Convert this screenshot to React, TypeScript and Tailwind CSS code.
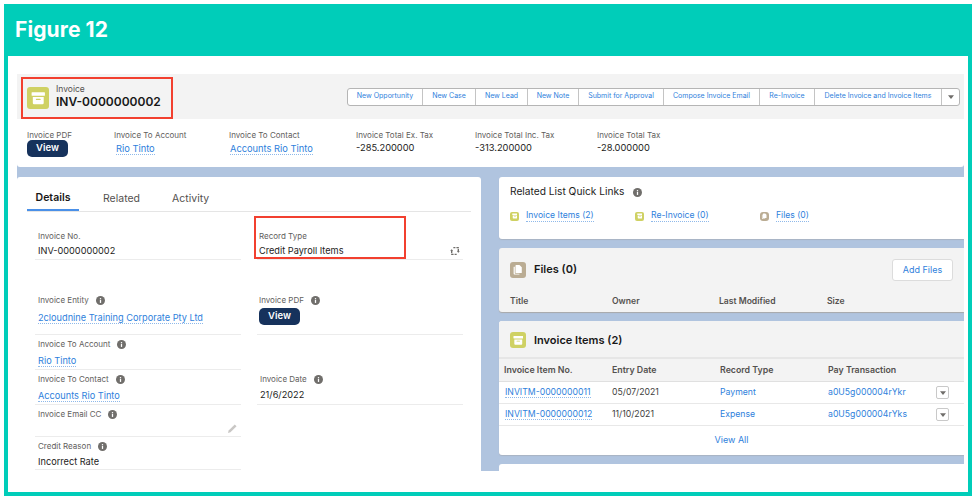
const font = "font-['Inter',sans-serif]"

function ArchiveIcon({ size, className }: { size: number; className: string }) {
  return (
    <span className={`inline-flex shrink-0 items-center justify-center ${className}`} style={{ width: size, height: size }}>
      <svg viewBox="0 0 24 24" width={size * 0.66} height={size * 0.66} fill="white">
        <rect x="1" y="2" width="22" height="6" rx="1" />
        <path d="M3 10h18v10a2 2 0 0 1-2 2H5a2 2 0 0 1-2-2z" />
        <rect x="8" y="13" width="8" height="2" rx="1" fill="#cfd163" />
      </svg>
    </span>
  )
}

function FilesIcon({ size }: { size: number }) {
  return (
    <span className="inline-flex shrink-0 items-center justify-center rounded-[3px] bg-[#baac93]" style={{ width: size, height: size }}>
      <svg viewBox="0 0 24 24" width={size * 0.7} height={size * 0.7} fill="white">
        <path d="M9 2h7l5 5v11a1.500 1.500 0 0 1-1.500 1.500H9A1.500 1.500 0 0 1 7.500 18V3.500A1.500 1.500 0 0 1 9 2z" />
        <path d="M4 6h2v14a1 1 0 0 0 1 1h9v1.500H5A1.500 1.500 0 0 1 3.500 21V6.500z" />
      </svg>
    </span>
  )
}

function Info() {
  return (
    <svg viewBox="0 0 10 10" className="ml-[7px] h-[9px] w-[9px] shrink-0">
      <circle cx="5" cy="5" r="5" fill="#706e6b" />
      <rect x="4.300" y="4.300" width="1.400" height="3.400" fill="white" />
      <rect x="4.300" y="2.300" width="1.400" height="1.300" fill="white" />
    </svg>
  )
}

function Caret() {
  return (
    <svg viewBox="0 0 8 5" className="h-[4px] w-[6px]">
      <path d="M0 0h8L4 5z" fill="#706e6b" />
    </svg>
  )
}

function Linked({ children }: { children: React.ReactNode }) {
  return <span className="border-b border-dotted border-[#8fb9ea] leading-[11px] text-[#2f7fdc]">{children}</span>
}

function ViewButton() {
  return <div className="flex h-[17px] w-[41px] items-center justify-center rounded-[5px] bg-[#16325c] text-[9.500px] font-semibold text-white">View</div>
}

function Label({ text, info }: { text: string; info?: boolean }) {
  return (
    <div className="flex h-[12px] items-center text-[8px] text-[#5f5e5c]">
      {text}
      {info && <Info />}
    </div>
  )
}

// pt = distance from row top to label, gap = distance from label to value
function Field({ label, info, children, pt, gap }: { label: string; info?: boolean; children?: React.ReactNode; pt: string; gap: string }) {
  return (
    <div className={`border-b border-[#ececec] pl-[3px] ${pt}`}>
      <Label text={label} info={info} />
      <div className={`relative flex h-[14px] items-center text-[9.200px] text-[#1d1c1b] ${gap}`}>{children}</div>
    </div>
  )
}

const actions = [
  { text: "New Opportunity", w: "w-[75px]" },
  { text: "New Case", w: "w-[53px]" },
  { text: "New Lead", w: "w-[52px]" },
  { text: "New Note", w: "w-[51px]" },
  { text: "Submit for Approval", w: "w-[85px]" },
  { text: "Compose Invoice Email", w: "w-[96px]" },
  { text: "Re-Invoice", w: "w-[55px]" },
  { text: "Delete Invoice and Invoice Items", w: "w-[127px]" },
]

const highlights = [
  { label: "Invoice To Account", w: "w-[115px]", link: "Rio Tinto", pl: "pl-[2px]" },
  { label: "Invoice To Contact", w: "w-[127px]", link: "Accounts Rio Tinto", pl: "pl-[1px]" },
  { label: "Invoice Total Ex. Tax", w: "w-[119px]", value: "-285.200000" },
  { label: "Invoice Total Inc. Tax", w: "w-[122px]", value: "-313.200000" },
  { label: "Invoice Total Tax", w: "w-[120px]", value: "-28.000000" },
]

const items = [
  { no: "INVITM-0000000011", date: "05/07/2021", type: "Payment", tx: "a0U5g000004rYkr" },
  { no: "INVITM-0000000012", date: "11/10/2021", type: "Expense", tx: "a0U5g000004rYks" },
]

export default function App() {
  return (
    <div className={`h-[500px] w-[976px] overflow-hidden bg-white p-[4px] ${font}`}>
      <div className="flex h-[492px] w-[968px] flex-col bg-[#00cdb9] px-[4px] pb-[4px]">
        <div className="flex h-[52px] shrink-0 items-center pb-[1px] pl-[7px] text-[21px] font-bold tracking-[0.1px] text-white">Figure 12</div>
        <div className="flex-1 overflow-hidden bg-white pb-[21px] pl-[9px] pr-[4px] pt-[18px]">
          <div className="flex h-full flex-col overflow-hidden bg-[#b0c4df]">
            {/* Record header */}
            <div className="shrink-0 rounded-b-[3px] bg-white">
              <div className="flex h-[45px] items-center bg-[#f3f3f3] pl-[4px]">
                <div className="mt-[3px] flex h-[42px] w-[152px] items-center gap-[7px] self-end border-2 border-[#f2402f] pl-[4px]">
                  <ArchiveIcon size={22} className="rounded-[3px] bg-[#cfd163]" />
                  <div className="flex flex-col pb-[3px]">
                    <span className="text-[8.500px] leading-[11px] text-[#54514f]">Invoice</span>
                    <span className="text-[12px] font-semibold leading-[14px] text-[#181818]">INV-0000000002</span>
                  </div>
                </div>
                <div className="ml-[174px] flex h-[18px] overflow-hidden rounded-[3px] border border-[#b5b5b5] bg-white">
                  {actions.map((a) => (
                    <div key={a.text} className={`flex items-center justify-center whitespace-nowrap border-r border-[#c4c4c4] text-[7px] text-[#2f7fdc] ${a.w}`}>
                      {a.text}
                    </div>
                  ))}
                  <div className="flex w-[17px] items-center justify-center">
                    <Caret />
                  </div>
                </div>
              </div>
              <div className="flex h-[48px] pl-[10px] pt-[10px]">
                <div className="w-[87px]">
                  <div className="text-[8px] leading-[12px] text-[#5f5e5c]">Invoice PDF</div>
                  <div className="-mt-[1px]"><ViewButton /></div>
                </div>
                {highlights.map((h) => (
                  <div key={h.label} className={h.w}>
                    <div className="text-[8px] leading-[12px] text-[#5f5e5c]">{h.label}</div>
                    {h.link ? (
                      <div className={`mt-[1px] text-[9.300px] leading-[13px] ${h.pl}`}><Linked>{h.link}</Linked></div>
                    ) : (
                      <div className="text-[9.300px] leading-[13px] text-[#1d1c1b]">{h.value}</div>
                    )}
                  </div>
                ))}
              </div>
            </div>

            <div className="mt-[10px] flex min-h-0 flex-1 gap-[18px] overflow-hidden">
              {/* Left: details */}
              <div className="w-[464px] shrink-0 rounded-t-[3px] bg-white px-[10px] pt-[9px]">
                <div className="flex h-[26px] items-stretch border-b border-[#e5e5e5] text-[10.500px] text-[#54514f]">
                  <div className="flex w-[52px] items-center justify-center border-b-2 border-[#4a90e8] font-semibold text-[#181818]">Details</div>
                  <div className="ml-[24px] flex items-center">Related</div>
                  <div className="ml-[32px] flex items-center">Activity</div>
                </div>
                <div className="ml-[8px] grid w-[428px] grid-cols-[206px_206px] grid-rows-[48px_75px_35px_35px_32px_33px] gap-x-[16px]">
                  <Field label="Invoice No." pt="pt-[18px]" gap="mt-[2px]">INV-0000000002</Field>
                  <div className="relative border-b border-[#ececec] pl-[2px] pt-[18px]">
                    <div className="absolute bottom-0 left-[-3px] h-[43px] w-[152px] border-2 border-[#f2402f]" />
                    <Label text="Record Type" />
                    <div className="mt-[2px] flex h-[14px] items-center text-[9.200px] text-[#1d1c1b]">Credit Payroll Items</div>
                    <svg viewBox="0 0 12 12" className="absolute bottom-[3px] right-[3px] h-[10px] w-[10px]" stroke="#706e6b" strokeWidth="1.600" fill="none">
                      <path d="M4 2h6v4M8 10H2V6" strokeDasharray="2.500 1.200" />
                      <path d="M9 6l1 1 1-1M1 6l1-1 1 1" />
                    </svg>
                  </div>

                  <Field label="Invoice Entity" info pt="pt-[34px]" gap="mt-[5px]"><Linked>2cloudnine Training Corporate Pty Ltd</Linked></Field>
                  <div className="border-b border-[#ececec] pl-[2px] pt-[34px]">
                    <Label text="Invoice PDF" info />
                    <div className="mt-[2px]"><ViewButton /></div>
                  </div>

                  <Field label="Invoice To Account" info pt="pt-[3px]" gap="mt-[4px]"><Linked>Rio Tinto</Linked></Field>
                  <div />

                  <Field label="Invoice To Contact" info pt="pt-[3px]" gap="mt-[4px]"><Linked>Accounts Rio Tinto</Linked></Field>
                  <Field label="Invoice Date" info pt="pt-[3px]" gap="mt-[3px]">21/6/2022</Field>

                  <Field label="Invoice Email CC" info pt="pt-[3px]" gap="mt-[3px]">
                    <svg viewBox="0 0 10 10" className="absolute right-[4px] top-[1px] h-[9px] w-[9px]">
                      <path d="M0 10l.7-2.700L7.500.5l2 2-6.800 6.800z" fill="#c9c7c5" />
                    </svg>
                  </Field>
                  <div />

                  <Field label="Credit Reason" info pt="pt-[3px]" gap="mt-[3px]">Incorrect Rate</Field>
                  <div />
                </div>
              </div>

              {/* Right: related lists */}
              <div className="flex min-w-0 flex-1 flex-col gap-[9px]">
                <div className="h-[62px] shrink-0 rounded-l-[3px] bg-white pl-[11px] pt-[7px] shadow-[0_1px_1px_#a9b4c4]">
                  <div className="flex h-[16px] items-center text-[10.200px] text-[#1d1c1b]">
                    Related List Quick Links
                    <span className="ml-[2px]"><Info /></span>
                  </div>
                  <div className="mt-[10px] flex text-[8.600px]">
                    <div className="flex w-[125px] items-center gap-[7px]">
                      <ArchiveIcon size={9} className="rounded-[2px] bg-[#cfd163]" />
                      <Linked>Invoice Items (2)</Linked>
                    </div>
                    <div className="flex w-[125px] items-center gap-[7px]">
                      <ArchiveIcon size={9} className="rounded-[2px] bg-[#cfd163]" />
                      <Linked>Re-Invoice (0)</Linked>
                    </div>
                    <div className="flex items-center gap-[7px]">
                      <FilesIcon size={9} />
                      <Linked>Files (0)</Linked>
                    </div>
                  </div>
                </div>

                <div className="h-[64px] shrink-0 rounded-l-[3px] bg-[#f3f3f3] pl-[11px] shadow-[0_1px_1px_#a9a9a9]">
                  <div className="flex h-[43px] items-center pr-[11px]">
                    <FilesIcon size={16} />
                    <span className="ml-[8px] text-[11px] font-semibold text-[#181818]">Files (0)</span>
                    <div className="ml-auto flex h-[22px] w-[61px] items-center justify-center rounded-[3px] border border-[#dcdcdc] bg-white text-[9px] text-[#2f7fdc]">Add Files</div>
                  </div>
                  <div className="mt-[4px] grid grid-cols-[102px_107px_108px_1fr] text-[8.600px] font-semibold text-[#54514f]">
                    <span>Title</span>
                    <span>Owner</span>
                    <span>Last Modified</span>
                    <span>Size</span>
                  </div>
                </div>

                <div className="h-[134px] shrink-0 overflow-hidden rounded-l-[3px] bg-white shadow-[0_1px_1px_#a9b4c4]">
                  <div className="flex h-[38px] items-center border-b-2 border-[#e6e6e6] bg-[#f3f3f3] pl-[11px] pt-[2px]">
                    <ArchiveIcon size={16} className="rounded-[3px] bg-[#cfd163]" />
                    <span className="ml-[8px] text-[11px] font-semibold text-[#181818]">Invoice Items (2)</span>
                  </div>
                  <div className="grid h-[23px] grid-cols-[108px_108px_108px_1fr] items-center border-b border-[#e0e0e0] bg-[#f3f3f3] pl-[5px] text-[8.800px] font-semibold text-[#54514f]">
                    <span>Invoice Item No.</span>
                    <span>Entry Date</span>
                    <span>Record Type</span>
                    <span>Pay Transaction</span>
                  </div>
                  {items.map((it) => (
                    <div key={it.no} className="grid h-[22px] grid-cols-[107px_108px_108px_108px_13px] items-center border-b border-[#e8e8e8] pl-[6px] text-[8.700px]">
                      <span className="justify-self-start"><Linked>{it.no}</Linked></span>
                      <span className="text-[#3e3e3c]">{it.date}</span>
                      <span className="text-[#2f7fdc]">{it.type}</span>
                      <span className="text-[#2f7fdc]">{it.tx}</span>
                      <div className="flex h-[13px] w-[13px] items-center justify-center rounded-[2px] border border-[#c9c9c9]">
                        <Caret />
                      </div>
                    </div>
                  ))}
                  <div className="flex h-[28px] items-center justify-center text-[9px] text-[#2f7fdc]">View All</div>
                </div>

                <div className="h-[20px] shrink-0 rounded-tl-[3px] bg-white" />
              </div>
            </div>
          </div>
        </div>
      </div>
    </div>
  )
}
